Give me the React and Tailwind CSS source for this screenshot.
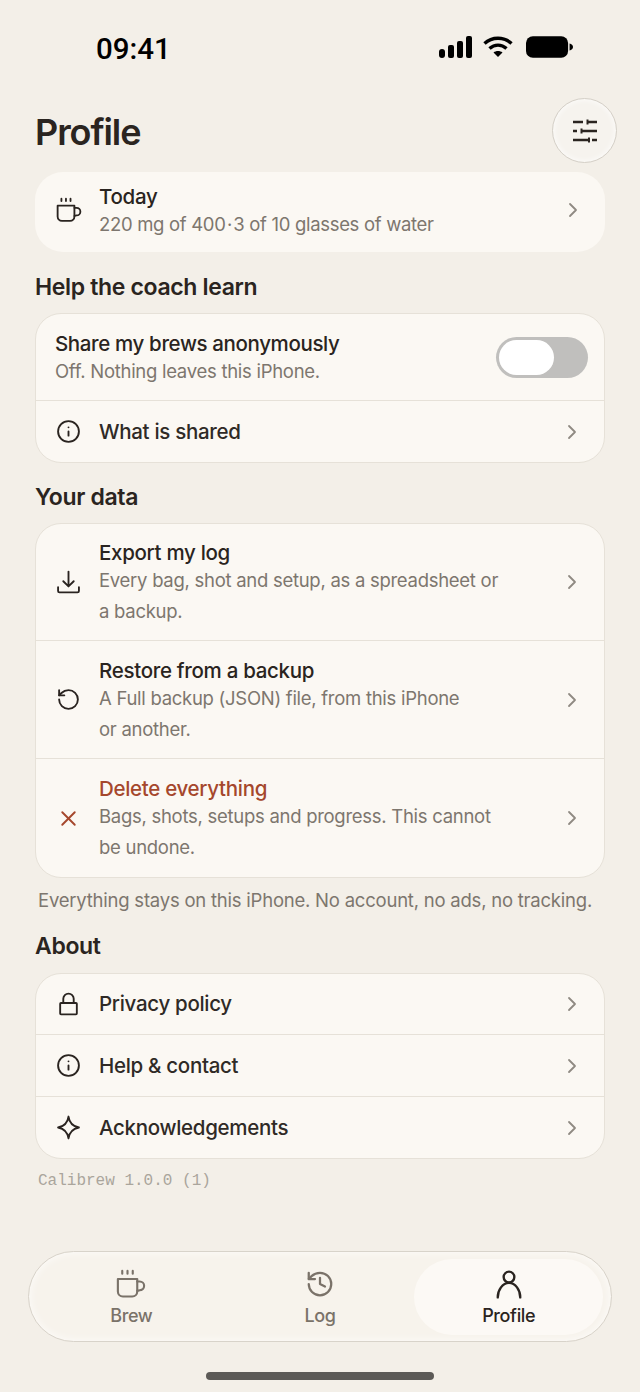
import { ChevronRight, History, Info, RotateCcw, X } from "lucide-react";

const font = { fontFamily: "Inter, sans-serif" };

const CupIcon = ({ className }) => (
    <svg viewBox="0 0 24 24" fill="none" stroke="currentColor" strokeWidth="1.7" strokeLinecap="round" strokeLinejoin="round" className={className}>
        <path d="M1.500 8h15.500v10a4 4 0 0 1-4 4H5.500a4 4 0 0 1-4-4z" />
        <path d="M17 10h2a3 3 0 0 1 0 7l-2 .5" />
        <path d="M5 1.500v2.300M9.200 1.500v2.300M13.400 1.500v2.300" />
    </svg>
);

const TrayIcon = ({ className }) => (
    <svg viewBox="0 0 24 24" fill="none" stroke="currentColor" strokeWidth="1.8" strokeLinecap="round" strokeLinejoin="round" className={className}>
        <path d="M12 1.500v14M7 10.800l5 5 5-5" />
        <path d="M2 16.500v3.700c0 .7.600 1.300 1.300 1.300h17.400c.7 0 1.300-.6 1.300-1.300v-3.700" />
    </svg>
);

const LockIcon = ({ className }) => (
    <svg viewBox="0 0 24 24" fill="none" stroke="currentColor" strokeWidth="1.8" strokeLinejoin="round" className={className}>
        <rect x="4" y="10.500" width="16" height="11" rx="0.800" />
        <path d="M7 10.500V6.500a5 5 0 0 1 10 0v4" />
    </svg>
);

const StarIcon = ({ className }) => (
    <svg viewBox="0 0 24 24" fill="none" stroke="currentColor" strokeWidth="1.8" strokeLinejoin="round" className={className}>
        <path d="M12 1.500c.8 6 3.600 9.200 10 10.500-6.400 1.300-9.200 4.500-10 10.500-.8-6-3.600-9.200-10-10.500 6.400-1.300 9.200-4.500 10-10.500z" />
    </svg>
);

const TuneIcon = ({ className }) => (
    <svg viewBox="0 0 26 26" fill="none" stroke="currentColor" strokeWidth="2.300" strokeLinecap="butt" className={className}>
        <path d="M1 4h10M15.500 4H25" />
        <path d="M15.500 1.500v5" strokeWidth="2" />
        <path d="M1 13h4M9.500 13H25" />
        <path d="M9.500 10.500v5" strokeWidth="2" />
        <path d="M1 22h15M20 22h5" />
        <path d="M17 19.500v5" strokeWidth="2" />
    </svg>
);

const UserIcon = ({ className }) => (
    <svg viewBox="0 0 28 28" fill="none" stroke="currentColor" strokeWidth="2.200" strokeLinecap="round" className={className}>
        <circle cx="14" cy="7.500" r="5" />
        <path d="M3.500 26.500c0-7 4.500-13.500 10.500-13.500s10.500 6.500 10.500 13.500" />
    </svg>
);

const StatusBar = () => (
    <div className="h-[94px] pl-[96px] pr-[67px] flex items-center justify-between text-black">
        <span className="text-[29.500px] font-medium translate-y-[2px]" style={{ fontFamily: "Roboto, sans-serif" }}>09:41</span>
        <div className="flex items-center">
            <svg viewBox="0 0 33 22" className="w-[33px] h-[22px]" fill="currentColor">
                <rect x="0" y="13" width="6" height="9" rx="3" />
                <rect x="9" y="9" width="6" height="13" rx="2" />
                <rect x="18" y="5" width="6" height="17" rx="2" />
                <rect x="27" y="0" width="6" height="22" rx="2" />
            </svg>
            <svg viewBox="0 0 30 22" className="ml-[11px] w-[30px] h-[22px]" fill="none" stroke="currentColor" strokeWidth="3.400" strokeLinecap="butt">
                <path d="M1.500 7.500C9 0.500 21 0.500 28.500 7.500" />
                <path d="M6.500 12.500c5-4.500 12-4.500 17 0" />
                <path d="M15 21l-4.500-4.500c2.500-2 6.500-2 9 0z" fill="currentColor" stroke="none" />
            </svg>
            <svg viewBox="0 0 48 22" className="ml-[13px] w-[47px] h-[22px]" fill="currentColor">
                <rect x="0" y="0" width="43" height="22" rx="7" />
                <path d="M44.500 7.500c2 .3 3.500 1.700 3.500 3.500s-1.500 3.200-3.500 3.500z" />
            </svg>
        </div>
    </div>
);

const Header = () => (
    <div className="mt-[2px] pl-[35px] pr-[23px] flex items-center justify-between h-[69px]">
        <h1 className="text-[36px] font-semibold tracking-[-0.03em] text-[#2a2420] translate-y-[1px]">Profile</h1>
        <button className="w-[65px] h-[65px] rounded-full bg-[#f6f3ee] border border-[#d5d0c8] flex items-center justify-center text-[#2a2420] shadow-[inset_0_0_6px_rgba(255,255,255,0.9)]">
            <TuneIcon className="w-[26px] h-[26px]" />
        </button>
    </div>
);

const SectionTitle = ({ children, className }) => (
    <h2 className={`text-[23px] leading-[26px] font-semibold tracking-[-0.015em] text-[#2a2420] ${className}`}>{children}</h2>
);

const Card = ({ children, className = "" }) => (
    <div className={`mx-[35px] rounded-[26px] bg-[#fbf8f3] border border-[#e6e1d8] divide-y divide-[#e6e1d8] overflow-hidden ${className}`}>
        {children}
    </div>
);

const Chevron = () => <ChevronRight className="w-[24px] h-[24px] text-[#8f8a82] shrink-0 ml-auto" strokeWidth={1.8} />;

const SimpleRow = ({ icon: Icon, label, className }) => (
    <div className={`flex items-center pl-[20px] pr-[20px] ${className}`}>
        <Icon className="w-[25px] h-[25px] text-[#2a2420] shrink-0" strokeWidth={1.8} />
        <span className="ml-[18px] text-[20.500px] leading-[26px] font-[450] tracking-[-0.015em] text-[#2f2a26]">{label}</span>
        <Chevron />
    </div>
);

const DataRow = ({ icon: Icon, title, lines, danger, className }) => (
    <div className={`flex items-center pl-[20px] pr-[20px] ${className}`}>
        <Icon className={`w-[25px] h-[25px] shrink-0 ${danger ? "text-[#a5472c]" : "text-[#2a2420]"}`} strokeWidth={1.8} />
        <div className="ml-[18px]">
            <div className={`text-[20.500px] leading-[26px] font-[450] tracking-[-0.015em] ${danger ? "text-[#a5472c]" : "text-[#2a2420]"}`}>{title}</div>
            <div className="mt-[1px] text-[18.500px] leading-[26px] tracking-[-0.015em] text-[#7d766e]">{lines[0]}</div>
            <div className="mt-[5px] text-[18.500px] leading-[26px] tracking-[-0.015em] text-[#7d766e]">{lines[1]}</div>
        </div>
        <Chevron />
    </div>
);

const Tab = ({ icon: Icon, label, active, strokeWidth }) => (
    <div className={`flex-1 h-[76px] pt-[4px] rounded-[38px] flex flex-col items-center justify-center ${active ? "bg-[#fcf9f5] text-[#2a2420]" : "text-[#7a7269]"}`}>
        <Icon className="w-[30px] h-[30px]" strokeWidth={strokeWidth} />
        <span className="mt-[5px] text-[18px] leading-[24px] font-[450] tracking-[-0.02em]">{label}</span>
    </div>
);

export default function App() {
    return (
        <div className="w-[640px] h-[1392px] bg-[#f3efe8] flex flex-col overflow-hidden" style={font}>
            <StatusBar />
            <Header />
            <div className="mt-[7px] mx-[35px] h-[80px] rounded-[28px] bg-[#fbf8f3] flex items-center pl-[21px] pr-[20px] pb-[4px]">
                <CupIcon className="w-[26px] h-[26px] text-[#2a2420] shrink-0" />
                <div className="ml-[17px]">
                    <div className="text-[20.500px] leading-[26px] font-[450] tracking-[-0.015em] text-[#2a2420]">Today</div>
                    <div className="mt-[1px] text-[18.500px] leading-[26px] tracking-[-0.017em] text-[#7d766e]">220 mg of 400{"\u200a"}·{"\u200a"}3 of 10 glasses of water</div>
                </div>
                <Chevron />
            </div>

            <SectionTitle className="mt-[22px] ml-[35px]">Help the coach learn</SectionTitle>
            <Card className="mt-[13px]">
                <div className="h-[87px] flex items-center pl-[19px] pr-[16px]">
                    <div>
                        <div className="text-[20.500px] leading-[26px] font-[450] tracking-[-0.018em] text-[#2a2420]">Share my brews anonymously</div>
                        <div className="mt-[1px] text-[18.500px] leading-[26px] tracking-[-0.015em] text-[#7d766e]">Off. Nothing leaves this iPhone.</div>
                    </div>
                    <div className="ml-auto w-[92px] h-[41px] rounded-full bg-[#c0bfbd] p-[3px]">
                        <div className="w-[55px] h-[35px] rounded-full bg-white"></div>
                    </div>
                </div>
                <SimpleRow icon={Info} label="What is shared" className="h-[61px]" />
            </Card>

            <SectionTitle className="mt-[21px] ml-[35px]">Your data</SectionTitle>
            <Card className="mt-[13px]">
                <DataRow icon={TrayIcon} title="Export my log" lines={["Every bag, shot and setup, as a spreadsheet or", "a backup."]} className="h-[117px]" />
                <DataRow icon={RotateCcw} title="Restore from a backup" lines={["A Full backup (JSON) file, from this iPhone", "or another."]} className="h-[118px]" />
                <DataRow icon={X} danger title="Delete everything" lines={["Bags, shots, setups and progress. This cannot", "be undone."]} className="h-[118px]" />
            </Card>
            <p className="mt-[9px] ml-[38px] text-[18.500px] leading-[26px] tracking-[-0.012em] text-[#7d766e]">Everything stays on this iPhone. No account, no ads, no tracking.</p>

            <SectionTitle className="mt-[20px] ml-[35px]">About</SectionTitle>
            <Card className="mt-[14px]">
                <SimpleRow icon={LockIcon} label="Privacy policy" className="h-[61px]" />
                <SimpleRow icon={Info} label="Help & contact" className="h-[62px]" />
                <SimpleRow icon={StarIcon} label="Acknowledgements" className="h-[61px]" />
            </Card>
            <p className="mt-[11px] ml-[38px] text-[16px] leading-[22px] text-[#aaa59c]" style={{ fontFamily: "'Liberation Mono', monospace" }}>Calibrew 1.0.0 (1)</p>

            <div className="mt-[59px] mx-[28px] h-[91px] rounded-[46px] bg-[#f7f3ec] border border-[#d8d3ca] flex items-center px-[8px] shadow-[inset_0_0_10px_rgba(255,255,255,0.8)]">
                <Tab icon={CupIcon} label="Brew" />
                <Tab icon={History} label="Log" strokeWidth={1.8} />
                <Tab icon={UserIcon} label="Profile" active />
            </div>
            <div className="mt-[30px] mx-auto w-[228px] h-[8px] rounded-full bg-[#5c5a57]"></div>
        </div>
    );
}
